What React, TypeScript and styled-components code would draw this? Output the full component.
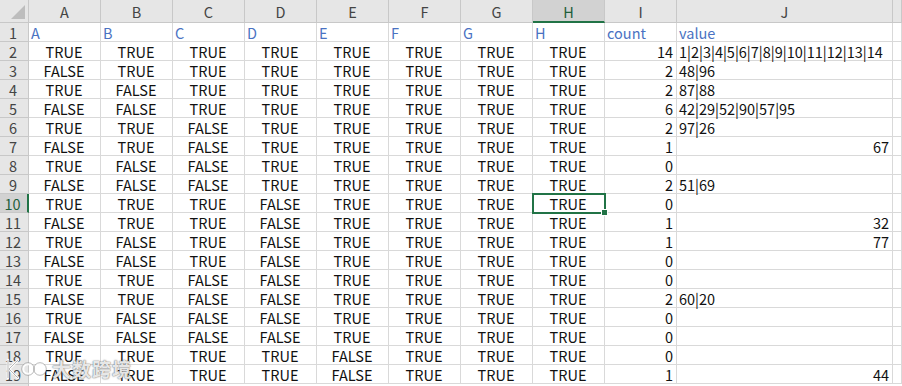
import styled, { createGlobalStyle, css } from 'styled-components';

const GlobalStyle = createGlobalStyle`
  html, body {
    margin: 0;
    padding: 0;
    background: #ffffff;
    overflow: hidden;
  }
  body {
    font-family: "Noto Sans CJK SC", "Noto Sans", sans-serif;
  }
`;

const cols = ['A', 'B', 'C', 'D', 'E', 'F', 'G', 'H', 'I', 'J'];
const selCol = 7;
const selRow = 10;

interface Extra {
  count: number;
  value: string;
}

// I / J columns, rows 2..19
const extras: Extra[] = [
  { count: 14, value: '1|2|3|4|5|6|7|8|9|10|11|12|13|14' },
  { count: 2, value: '48|96' },
  { count: 2, value: '87|88' },
  { count: 6, value: '42|29|52|90|57|95' },
  { count: 2, value: '97|26' },
  { count: 1, value: '67' },
  { count: 0, value: '' },
  { count: 2, value: '51|69' },
  { count: 0, value: '' },
  { count: 1, value: '32' },
  { count: 1, value: '77' },
  { count: 0, value: '' },
  { count: 0, value: '' },
  { count: 2, value: '60|20' },
  { count: 0, value: '' },
  { count: 0, value: '' },
  { count: 0, value: '' },
  { count: 1, value: '44' },
];

const Sheet = styled.div`
  position: relative;
  display: grid;
  grid-template-columns: 29px repeat(9, 72px) 216px 1fr;
  grid-auto-rows: 19px;
  grid-template-rows: 23px;
  width: 902px;
  height: 386px;
  overflow: hidden;
  font-size: 14.5px;
  color: #111;
`;

const HeadCell = styled.div<{ $sel?: boolean }>`
  box-sizing: border-box;
  background: ${(p) => (p.$sel ? '#d2d2d2' : '#e6e6e6')};
  border-right: 1px solid #c8c8c8;
  border-bottom: ${(p) => (p.$sel ? '2px solid #217346' : '1px solid #c8c8c8')};
  color: ${(p) => (p.$sel ? '#1d5e3b' : '#444')};
  display: flex;
  align-items: center;
  justify-content: center;
  padding-top: 1px;
`;

const Corner = styled.div`
  position: relative;
  box-sizing: border-box;
  background: #e6e6e6;
  border-right: 1px solid #c8c8c8;
  border-bottom: 1px solid #c8c8c8;
  &::after {
    content: '';
    position: absolute;
    right: 3px;
    bottom: 3px;
    width: 0;
    height: 0;
    border-left: 14px solid transparent;
    border-bottom: 14px solid #bdbdbd;
  }
`;

const RowHead = styled.div<{ $sel?: boolean }>`
  box-sizing: border-box;
  background: ${(p) => (p.$sel ? '#d2d2d2' : '#e6e6e6')};
  border-right: ${(p) => (p.$sel ? '2px solid #217346' : '1px solid #c8c8c8')};
  border-bottom: 1px solid #c8c8c8;
  color: ${(p) => (p.$sel ? '#1d5e3b' : '#444')};
  display: flex;
  align-items: flex-end;
  justify-content: center;
  line-height: 17px;
  padding-right: 2px;
`;

const Cell = styled.div<{ $align?: 'left' | 'center' | 'right'; $blue?: boolean; $active?: boolean }>`
  position: relative;
  box-sizing: border-box;
  border-right: 1px solid #d9d9d9;
  border-bottom: 1px solid #d9d9d9;
  display: flex;
  align-items: flex-end;
  justify-content: ${(p) =>
    p.$align === 'left' ? 'flex-start' : p.$align === 'right' ? 'flex-end' : 'center'};
  padding: 0 3px 0 2px;
  line-height: 16px;
  white-space: nowrap;
  color: ${(p) => (p.$blue ? '#4a72c2' : '#111')};
  ${(p) =>
    p.$active &&
    css`
      outline: 2px solid #217346;
      outline-offset: -1px;
      z-index: 2;
      &::after {
        content: '';
        position: absolute;
        right: -4px;
        bottom: -4px;
        width: 5px;
        height: 5px;
        background: #217346;
        border: 1px solid #fff;
      }
    `}
`;

const Watermark = styled.div`
  position: absolute;
  left: 4px;
  bottom: 4px;
  display: flex;
  align-items: center;
  gap: 4px;
  color: rgba(255, 255, 255, 0.85);
  font-size: 19px;
  line-height: 24px;
  font-weight: 700;
  letter-spacing: 1px;
  text-shadow: 0 0 1px rgba(90, 90, 90, 0.9), 0 0 2px rgba(90, 90, 90, 0.6);
  pointer-events: none;
  z-index: 5;
`;

const Logo = () => (
  <svg width="44" height="26" viewBox="0 0 44 26">
    <g fill="none" stroke="rgba(255,255,255,0.9)" strokeWidth="2.6" strokeLinecap="round">
      <path d="M4 4 L4 22 M14 4 L5 13 L14 22" />
      <circle cx="24" cy="13" r="5" />
      <circle cx="36" cy="13" r="5" />
    </g>
    <g fill="none" stroke="rgba(110,110,110,0.6)" strokeWidth="0.8">
      <path d="M4 4 L4 22 M14 4 L5 13 L14 22" />
      <circle cx="24" cy="13" r="6.3" />
      <circle cx="36" cy="13" r="6.3" />
    </g>
  </svg>
);

const App = () => {
  const rows: JSX.Element[] = [];
  extras.forEach((ex, i) => {
    const r = i + 2;
    rows.push(
      <RowHead key={`h${r}`} $sel={r === selRow}>
        {r}
      </RowHead>
    );
    for (let k = 0; k < 8; k++) {
      const v = (i >> k) & 1 ? 'FALSE' : 'TRUE';
      rows.push(
        <Cell key={`${r}-${k}`} $active={r === selRow && k === selCol}>
          {v}
        </Cell>
      );
    }
    rows.push(
      <Cell key={`${r}-I`} $align="right">
        {ex.count}
      </Cell>
    );
    const numeric = /^\d+$/.test(ex.value);
    rows.push(
      <Cell key={`${r}-J`} $align={numeric ? 'right' : 'left'}>
        {ex.value}
      </Cell>
    );
    rows.push(<Cell key={`${r}-K`} />);
  });

  return (
    <>
      <GlobalStyle />
      <Sheet>
        <Corner />
        {cols.map((c, i) => (
          <HeadCell key={c} $sel={i === selCol}>
            {c}
          </HeadCell>
        ))}
        <HeadCell />
        <RowHead>1</RowHead>
        {['A', 'B', 'C', 'D', 'E', 'F', 'G', 'H', 'count', 'value'].map((t) => (
          <Cell key={`1-${t}`} $align="left" $blue>
            {t}
          </Cell>
        ))}
        <Cell />
        {rows}
        <RowHead>20</RowHead>
        <Watermark>
          <Logo />
          <span>大数跨境</span>
        </Watermark>
      </Sheet>
    </>
  );
};

export default App;
